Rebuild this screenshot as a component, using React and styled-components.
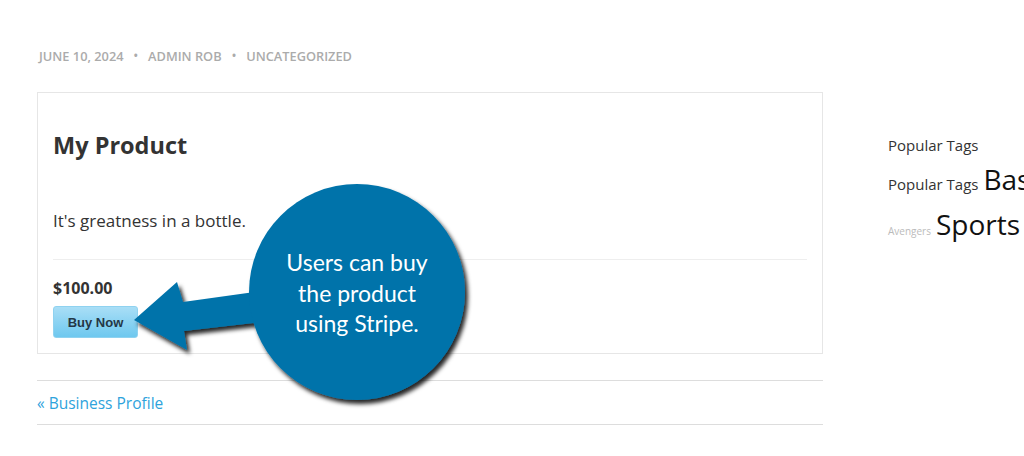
import React from "react";
import styled, { createGlobalStyle } from "styled-components";

const GlobalStyle = createGlobalStyle`
    html, body {
        margin: 0;
        padding: 0;
        background: #fff;
        overflow: hidden;
    }
    body {
        font-family: "Open Sans", "Noto Sans", sans-serif;
        color: #333;
    }
`;

// 오른쪽 사이드바에 들어가는 태그들
const tags = [
    { label: "Popular Tags", size: 15, color: "#333" },
    { label: "Basketball", size: 28, color: "#111" },
    { label: "Avengers", size: 10, color: "#bbb" },
    { label: "Sports", size: 28, color: "#111" },
];

const App = () => {
    return (
        <Page>
            <GlobalStyle />
            <Main>
                <Meta>
                    <span>June 10, 2024</span>
                    <Dot>•</Dot>
                    <span>Admin Rob</span>
                    <Dot>•</Dot>
                    <span>Uncategorized</span>
                </Meta>

                <Card>
                    <Title>My Product</Title>
                    <Desc>It's greatness in a bottle.</Desc>
                    <Divider />
                    <Price>$100.00</Price>
                    <BuyButton>Buy Now</BuyButton>
                </Card>

                <PostNav>
                    <a href="#">« Business Profile</a>
                </PostNav>
            </Main>

            <Sidebar>
                <WidgetTitle>Popular Tags</WidgetTitle>
                <TagCloud>
                    {tags.map((t) => (
                        <Tag key={t.label} size={t.size} color={t.color}>
                            {t.label}
                        </Tag>
                    ))}
                </TagCloud>
            </Sidebar>

            {/* 설명용 말풍선 (버튼 위에 겹쳐짐) */}
            <Callout>
                <svg width="360" height="250" viewBox="120 170 360 250">
                    <defs>
                        <filter id="shadow" x="-20%" y="-20%" width="150%" height="150%">
                            <feDropShadow dx="3" dy="4" stdDeviation="2" floodColor="#000" floodOpacity="0.85" />
                        </filter>
                    </defs>
                    <g filter="url(#shadow)" fill="#0073aa">
                        <polygon points="134,320 177,282 183,302 262,291 262,322 184,331 187,350" />
                        <circle cx="357" cy="292" r="108" />
                    </g>
                </svg>
                <CalloutText>
                    Users can buy
                    <br />
                    the product
                    <br />
                    using Stripe.
                </CalloutText>
            </Callout>
        </Page>
    );
};

const Page = styled.div`
    position: relative;
    display: flex;
    align-items: flex-start;
    width: 1200px;
    height: 456px;
    padding: 47px 0 0 37px;
    box-sizing: border-box;
`;

const Main = styled.div`
    width: 786px;
    flex-shrink: 0;
`;

const Meta = styled.div`
    display: flex;
    align-items: center;
    gap: 9px;
    padding-left: 2px;
    font-size: 12.8px;
    font-weight: 600;
    line-height: 18px;
    text-transform: uppercase;
    color: #ababab;
`;

const Dot = styled.span`
    font-size: 12px;
    margin: 0 1px;
`;

const Card = styled.div`
    margin-top: 27px;
    border: 1px solid #e6e6e6;
    padding: 0 15px 15px;
`;

const Title = styled.h2`
    margin: 37px 0 0;
    font-size: 23.5px;
    line-height: 30px;
    font-weight: 700;
    color: #333;
`;

const Desc = styled.p`
    margin: 49px 0 0;
    font-size: 17px;
    line-height: 24px;
    color: #333;
`;

const Divider = styled.hr`
    margin: 26px 0 0;
    border: none;
    border-top: 1px solid #eee;
`;

const Price = styled.div`
    margin-top: 17px;
    font-size: 16px;
    line-height: 22px;
    font-weight: 700;
    color: #333;
`;

const BuyButton = styled.button`
    display: block;
    margin-top: 7px;
    width: 85px;
    height: 32px;
    padding: 0;
    border: 1px solid #8fd2f0;
    border-radius: 3px;
    background: linear-gradient(#a9def6, #6ec8ef);
    font-family: "Liberation Sans", Arial, sans-serif;
    font-size: 13px;
    font-weight: 700;
    color: #243746;
    cursor: pointer;
`;

const PostNav = styled.div`
    margin-top: 26px;
    height: 43px;
    display: flex;
    align-items: center;
    border-top: 1px solid #ddd;
    border-bottom: 1px solid #ddd;
    a {
        font-size: 15.5px;
        color: #2ea3dc;
        text-decoration: none;
    }
`;

const Sidebar = styled.div`
    margin-left: 65px;
    margin-top: 87px;
    width: 280px;
    flex-shrink: 0;
`;

const WidgetTitle = styled.div`
    font-size: 15px;
    line-height: 22px;
    color: #333;
`;

const TagCloud = styled.div`
    margin-top: 3px;
    width: 262px;
    display: flex;
    flex-wrap: wrap;
    align-items: baseline;
    column-gap: 5px;
`;

const Tag = styled.span`
    font-size: ${(p) => p.size}px;
    line-height: 40px;
    color: ${(p) => p.color};
    white-space: nowrap;
`;

const Callout = styled.div`
    position: absolute;
    left: 120px;
    top: 170px;
    width: 360px;
    height: 250px;
    svg {
        display: block;
    }
`;

const CalloutText = styled.div`
    position: absolute;
    left: 137px;
    top: 77px;
    width: 200px;
    text-align: center;
    font-family: Lato, "Open Sans", sans-serif;
    font-size: 23px;
    line-height: 30.5px;
    color: #fff;
`;

export default App;
